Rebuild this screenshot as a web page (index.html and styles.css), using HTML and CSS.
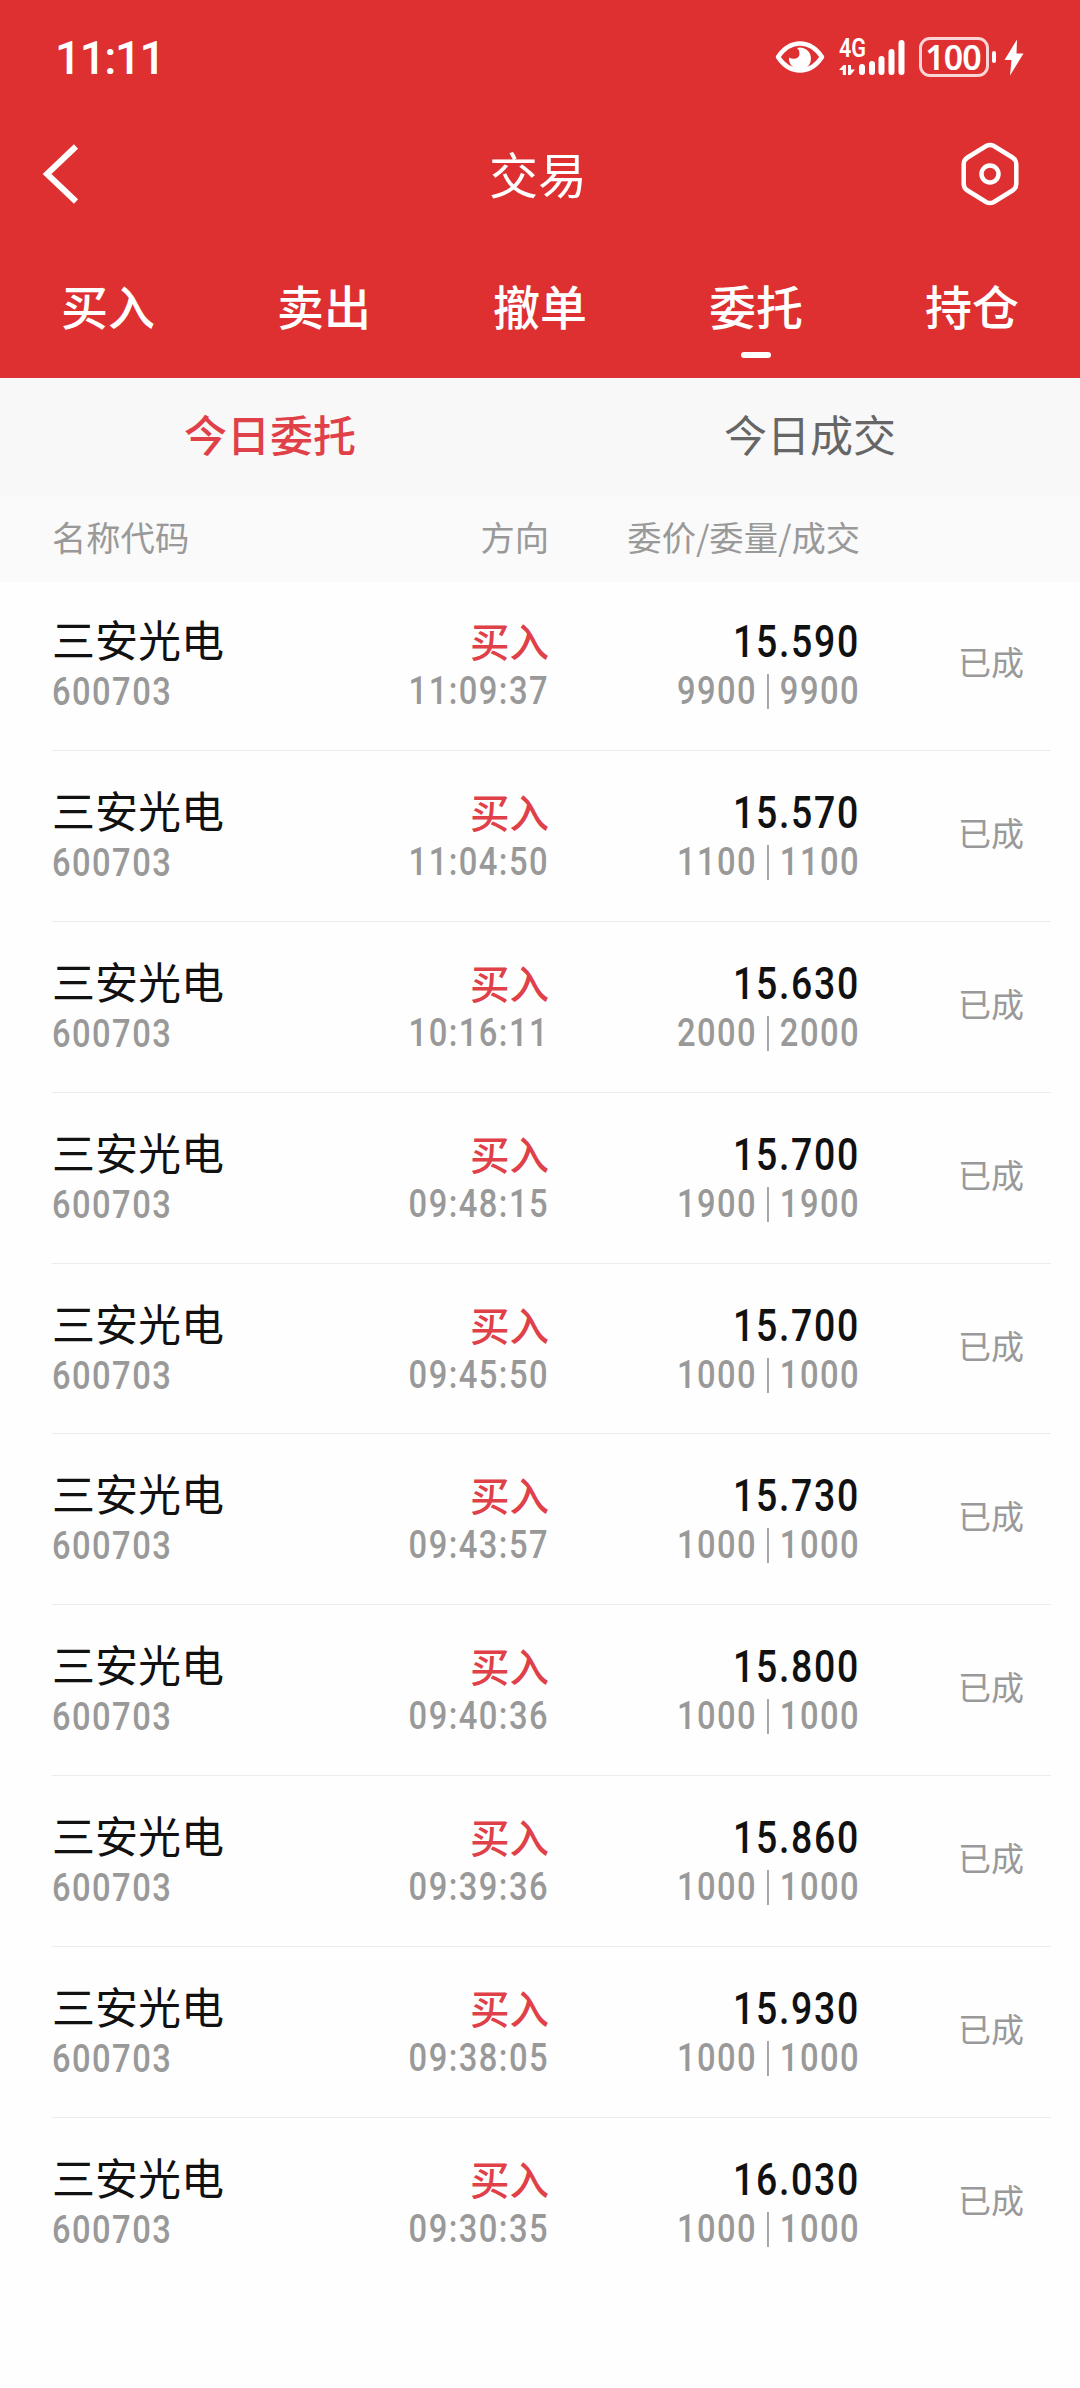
FILE: index.html
```html
<!DOCTYPE html>
<html lang="zh-CN">
<head>
    <meta charset="UTF-8">
    <meta name="viewport" content="width=device-width, initial-scale=1.0">
    <title>交易</title>
    <link rel="stylesheet" href="styles.css">
</head>
<body>

<header class="header">
    <!-- 状态栏 -->
    <div class="status-bar">
        <span class="clock">11:11</span>
        <div class="status-icons">
            <svg class="icon-eye" width="50" height="34" viewBox="0 0 50 34">
                <path d="M3 17C9 8 16 3.500 25 3.500S41 8 47 17C41 26 34 30.500 25 30.500S9 26 3 17Z" fill="none" stroke="#fff" stroke-width="4.500" stroke-linejoin="round"/>
                <path d="M22 8A11 11 0 1 1 14 17.500C18 20 24 19 24.500 14C24.600 11.500 24 9.500 22 8Z" fill="#fff"/>
            </svg>
            <div class="signal">
                <span class="network">4G</span>
                <svg width="66" height="38" viewBox="0 0 66 38">
                    <path d="M0 32L4.500 27H7V37H3.800V32ZM9 27H12V31.500H16L11.500 37H9Z" fill="#fff"/>
                    <path d="M23 29V34M33 26V34M42.500 21V34M52.500 14V34M62.500 5V34" stroke="#fff" stroke-width="6" stroke-linecap="round"/>
                </svg>
            </div>
            <div class="battery">100</div>
            <span class="battery-cap"></span>
            <svg class="icon-bolt" width="20" height="37" viewBox="0 0 20 37">
                <path d="M13 0.500L0.500 21H7.500L6 36.500L19.500 14.500H12.500Z" fill="#fff"/>
            </svg>
        </div>
    </div>

    <!-- 标题栏 -->
    <div class="title-bar">
        <svg width="40" height="64" viewBox="0 0 40 64">
            <path d="M34 4.500L5 32L34 59.500" fill="none" stroke="#fff" stroke-width="6"/>
        </svg>
        <h1>交易</h1>
        <svg width="60" height="64" viewBox="0 0 60 64">
            <path d="M26.500 3.800Q30 2 33.500 3.800L52.500 15.500Q56.300 18 56.300 22V42Q56.300 46 52.500 48.500L33.500 60.200Q30 62 26.500 60.200L7.500 48.500Q3.700 46 3.700 42V22Q3.700 18 7.500 15.500Z" fill="none" stroke="#fff" stroke-width="4.500"/>
            <circle cx="30" cy="32" r="8.500" fill="none" stroke="#fff" stroke-width="4.500"/>
        </svg>
    </div>

    <nav class="tabs">
        <a>买入</a>
        <a>卖出</a>
        <a>撤单</a>
        <a class="active">委托</a>
        <a>持仓</a>
    </nav>
</header>

<div class="sub-tabs">
    <a class="active">今日委托</a>
    <a>今日成交</a>
</div>

<div class="list-head">
    <span>名称代码</span>
    <span>方向</span>
    <span>委价/委量/成交</span>
</div>

<div class="order-list" id="order-list">
    <!-- 委托记录 -->
</div>

<script>
    const orders = [
        { time: '11:09:37', price: '15.590', amount: 9900 },
        { time: '11:04:50', price: '15.570', amount: 1100 },
        { time: '10:16:11', price: '15.630', amount: 2000 },
        { time: '09:48:15', price: '15.700', amount: 1900 },
        { time: '09:45:50', price: '15.700', amount: 1000 },
        { time: '09:43:57', price: '15.730', amount: 1000 },
        { time: '09:40:36', price: '15.800', amount: 1000 },
        { time: '09:39:36', price: '15.860', amount: 1000 },
        { time: '09:38:05', price: '15.930', amount: 1000 },
        { time: '09:30:35', price: '16.030', amount: 1000 }
    ];

    document.getElementById('order-list').innerHTML = orders.map(order => `
        <div class="order">
            <div class="stock">
                <div class="name">三安光电</div>
                <div class="number code">600703</div>
            </div>
            <div class="side">
                <div class="direction">买入</div>
                <div class="number time">${order.time}</div>
            </div>
            <div class="deal">
                <div class="price">${order.price}</div>
                <div class="number amount"><span>${order.amount}</span><i></i><span>${order.amount}</span></div>
            </div>
            <div class="state">已成</div>
        </div>`).join('');
</script>

</body>
</html>
```
FILE: styles.css
```css
* {
    margin: 0;
    padding: 0;
    box-sizing: border-box;
}

body {
    font-family: 'Noto Sans CJK SC', sans-serif;
    background: #fefefe;
    color: #111;
}

svg {
    display: block;
}

.header {
    height: 378px;
    background: #de3031;
    color: #fff;
}

/* 状态栏 */
.status-bar {
    display: flex;
    justify-content: space-between;
    height: 114px;
    padding: 0 56px 0 55px;
}

.clock {
    font-family: 'Roboto', sans-serif;
    font-size: 46px;
    font-weight: 500;
    line-height: 54px;
    letter-spacing: -1.500px;
    margin-top: 31px;
}

.status-icons {
    display: flex;
    align-items: center;
    height: 114px;
}

.icon-eye {
    margin-right: 14px;
}

.signal {
    position: relative;
    margin-right: 14px;
}

.network {
    position: absolute;
    top: -4px;
    left: 0;
    font-family: 'Roboto', sans-serif;
    font-size: 26px;
    font-weight: 600;
    line-height: 28px;
    transform: scaleX(0.83);
    transform-origin: left;
}

.battery {
    width: 70px;
    height: 40px;
    border: 3px solid #fbd5d5;
    border-radius: 11px;
    font-family: 'Noto Sans', sans-serif;
    font-size: 34px;
    font-weight: 600;
    line-height: 34px;
    letter-spacing: -1px;
    text-indent: -2px;
    text-align: center;
}

.battery-cap {
    width: 4px;
    height: 12px;
    margin: 0 8px 0 3px;
    border-radius: 2px;
    background: #fff;
}

/* 标题栏 */
.title-bar {
    display: flex;
    align-items: center;
    justify-content: space-between;
    height: 120px;
    padding: 0 60px 0 42px;
}

.title-bar h1 {
    font-size: 49px;
    font-weight: 400;
    line-height: 72px;
    margin: -3px 0 0 34px;
}

.tabs {
    display: grid;
    grid-template-columns: repeat(5, 1fr);
    height: 144px;
}

.tabs a {
    position: relative;
    padding-top: 36px;
    font-size: 47px;
    font-weight: 500;
    line-height: 70px;
    text-align: center;
}

.tabs .active::after {
    content: '';
    position: absolute;
    left: 93px;
    top: 118px;
    width: 30px;
    height: 6px;
    border-radius: 3px;
    background: #fff;
}

.sub-tabs {
    display: grid;
    grid-template-columns: 1fr 1fr;
    height: 118px;
    background: #f8f8f8;
    color: #666;
    font-size: 43px;
    line-height: 110px;
    text-align: center;
}

.sub-tabs .active {
    color: #e04048;
    font-weight: 500;
}

.list-head,
.order {
    display: grid;
    grid-template-columns: 200px 297px 311px 164px;
}

.list-head {
    height: 86px;
    padding-left: 52px;
    background: #fafafa;
    color: #999;
    font-size: 34.300px;
    line-height: 80px;
}

.list-head span + span {
    text-align: right;
}

/* 委托记录 */
.order-list {
    margin: -2px 29px 0 52px;
}

.order {
    height: 170.900px;
    padding-top: 33px;
    border-bottom: 1px solid #ececec;
}

.order:last-child {
    border-bottom: none;
}

.name {
    font-size: 43px;
    line-height: 51px;
}

/* 数字压窄 */
.number,
.price {
    font-family: 'Roboto', sans-serif;
    transform: scaleX(0.86);
    transform-origin: right;
}

.number {
    font-size: 38px;
    font-weight: 500;
    line-height: 49px;
    letter-spacing: 1.700px;
    color: #999;
}

.code {
    line-height: 57px;
    transform-origin: left;
}

.side,
.deal,
.state {
    text-align: right;
}

.direction {
    font-size: 39.500px;
    font-weight: 500;
    line-height: 54px;
    color: #e04048;
}

.price {
    font-size: 43.500px;
    font-weight: 500;
    line-height: 60px;
    letter-spacing: 2px;
}

.amount {
    display: flex;
    align-items: center;
    justify-content: flex-end;
    line-height: 37px;
}

.amount i {
    width: 2px;
    height: 35px;
    margin: 0 12.500px 0 12px;
    background: #999;
}

.state {
    font-size: 33px;
    line-height: 97px;
    color: #999;
}
```
